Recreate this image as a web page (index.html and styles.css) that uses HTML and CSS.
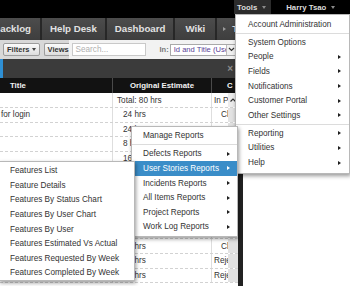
FILE: index.html
```html
<!DOCTYPE html>
<html lang="en">
<head>
  <meta charset="UTF-8">
  <title>Tasks</title>
  <link rel="stylesheet" href="styles.css">
</head>
<body>
<div class="page">

  <!-- top user bar -->
  <div class="topbar">
    <span class="nav-item active">Tools <i class="caret"></i></span>
    <span class="nav-item user">Harry Tsao <i class="caret"></i></span>
  </div>

  <!-- product tabs -->
  <div class="tabs">
    <span class="tab first">Backlog</span>
    <span class="tab">Help Desk</span>
    <span class="tab">Dashboard</span>
    <span class="tab wiki">Wiki</span>
    <span class="tab more"><i class="tab-arrow"></i>T</span>
  </div>

  <div class="workspace">
    <div class="grid-pane">
      <div class="toolbar">
        <span class="btn">Filters <i class="caret dark"></i></span>
        <span class="btn cut">Views</span>
        <div class="search">
          <span class="search-box">Search...</span>
          <span class="in-label">In:</span>
          <span class="select">
            <span class="select-text">Id and Title (Use</span>
            <span class="select-btn">
              <svg width="7" height="5" viewBox="0 0 7 5"><polyline points="1,1 3.5,3.5 6,1" fill="none" stroke="#333" stroke-width="1.2"/></svg>
            </span>
          </span>
        </div>
      </div>

      <div class="titlebar"><span class="close">&times;</span></div>

      <div class="grid-head">
        <span class="hcell title">Title</span>
        <span class="hcell est">Original Estimate</span>
        <span class="hcell status">C</span>
      </div>

      <div class="grid-body">
        <div class="row first">
          <span class="cell"></span>
          <span class="cell est total">Total: 80 hrs</span>
          <span class="cell status">In Progress</span>
          <span class="cell scroll up">
            <svg width="6" height="4" viewBox="0 0 6 4"><polyline points="0.5,3.5 3,1 5.5,3.5" fill="none" stroke="#333" stroke-width="1.2"/></svg>
          </span>
        </div>
        <div class="row">
          <span class="cell">for login</span>
          <span class="cell est">24 hrs</span>
          <span class="cell status mid">Closed</span>
          <span class="cell scroll"></span>
        </div>
        <div class="row"><span class="cell"></span><span class="cell est">24 hrs</span><span class="cell status"></span><span class="cell scroll"></span></div>
        <div class="row"><span class="cell"></span><span class="cell est">8 hrs</span><span class="cell status"></span><span class="cell scroll"></span></div>
        <div class="row"><span class="cell"></span><span class="cell est">16 hrs</span><span class="cell status"></span><span class="cell scroll"></span></div>
        <div class="row"><span class="cell"></span><span class="cell est">8 hrs</span><span class="cell status"></span><span class="cell scroll"></span></div>
        <div class="row"><span class="cell"></span><span class="cell est">16 hrs</span><span class="cell status"></span><span class="cell scroll"></span></div>
        <div class="row"><span class="cell"></span><span class="cell est">8 hrs</span><span class="cell status"></span><span class="cell scroll"></span></div>
        <div class="row"><span class="cell"></span><span class="cell est">24 hrs</span><span class="cell status"></span><span class="cell scroll"></span></div>
        <div class="row"><span class="cell"></span><span class="cell est">8 hrs</span><span class="cell status"></span><span class="cell scroll"></span></div>
        <div class="row"><span class="cell"></span><span class="cell est">24 hrs</span><span class="cell status mid">Closed</span><span class="cell scroll"></span></div>
        <div class="row"><span class="cell"></span><span class="cell est">24 hrs</span><span class="cell status">Rejected</span><span class="cell scroll"></span></div>
        <div class="row"><span class="cell"></span><span class="cell est">24 hrs</span><span class="cell status">Rejected</span><span class="cell scroll"></span></div>
      </div>
    </div>
    <div class="side-pane"></div>
  </div>

  <!-- Tools dropdown -->
  <div class="menu tools-menu">
    <div class="menu-item">Account Administration</div>
    <div class="menu-sep"></div>
    <div class="menu-item">System Options</div>
    <div class="menu-item">People<i class="arrow"></i></div>
    <div class="menu-item">Fields<i class="arrow"></i></div>
    <div class="menu-item">Notifications<i class="arrow"></i></div>
    <div class="menu-item">Customer Portal<i class="arrow"></i></div>
    <div class="menu-item">Other Settings<i class="arrow"></i></div>
    <div class="menu-sep"></div>
    <div class="menu-item">Reporting<i class="arrow"></i></div>
    <div class="menu-item">Utilities<i class="arrow"></i></div>
    <div class="menu-item">Help<i class="arrow"></i></div>
  </div>

  <!-- Reporting submenu -->
  <div class="menu reports-menu">
    <div class="menu-item">Manage Reports</div>
    <div class="menu-sep"></div>
    <div class="menu-item">Defects Reports<i class="arrow"></i></div>
    <div class="menu-item selected">User Stories Reports<i class="arrow"></i></div>
    <div class="menu-item">Incidents Reports<i class="arrow"></i></div>
    <div class="menu-item">All Items Reports<i class="arrow"></i></div>
    <div class="menu-item">Project Reports<i class="arrow"></i></div>
    <div class="menu-item">Work Log Reports<i class="arrow"></i></div>
  </div>

  <!-- User Stories submenu -->
  <div class="menu features-menu">
    <div class="menu-item">Features List</div>
    <div class="menu-item">Feature Details</div>
    <div class="menu-item">Features By Status Chart</div>
    <div class="menu-item">Features By User Chart</div>
    <div class="menu-item">Features By User</div>
    <div class="menu-item">Features Estimated Vs Actual</div>
    <div class="menu-item">Features Requested By Week</div>
    <div class="menu-item">Features Completed By Week</div>
  </div>

</div>
</body>
</html>
```

FILE: styles.css
```css
html, body {
  margin: 0;
  padding: 0;
  background: #fff;
  font-family: 'Liberation Sans', Arial, sans-serif;
  overflow: hidden;
}

.page {
  position: relative;
  width: 350px;
  height: 286px;
  overflow: hidden;
}

/* top bar */
.topbar {
  height: 18px;
  background: #000;
  display: flex;
  padding-left: 234px;
}

.nav-item {
  display: flex;
  align-items: center;
  gap: 5px;
  height: 14px;
  padding: 0 5px 0 3px;
  color: #dcdcdc;
  font-size: 7.8px;
  font-weight: bold;
}

.nav-item.active {
  background: #2c2c2c;
}

.nav-item.user {
  margin-left: 12px;
}

.caret {
  width: 0;
  height: 0;
  border-top: 3px solid #8a8a8a;
  border-left: 2.5px solid transparent;
  border-right: 2.5px solid transparent;
}

.caret.dark {
  border-top-color: #444;
}

/* tabs */
.tabs {
  display: flex;
  height: 22px;
  background: linear-gradient(#4c4c4c, #3e3e3e);
}

.tab {
  padding: 0 8px;
  line-height: 22px;
  color: #e2e2e2;
  font-size: 9.7px;
  font-weight: bold;
  white-space: nowrap;
  border-right: 2px solid #272727;
}

.tab.first {
  width: 31px;
  padding: 0 9px 0 0;
  display: flex;
  justify-content: flex-end;
  overflow: hidden;
}

.tab.wiki {
  padding: 0 10px;
}

.tab.more {
  display: flex;
  align-items: center;
  gap: 6px;
  padding: 0 4px 0 6px;
  border-right: none;
}

.tab-arrow {
  width: 0;
  height: 0;
  border-left: 3px solid #9a9a9a;
  border-top: 2.5px solid transparent;
  border-bottom: 2.5px solid transparent;
}

/* workspace */
.workspace {
  display: flex;
  height: 246px;
}

.grid-pane {
  width: 238px;
  flex-shrink: 0;
  overflow: hidden;
}

.side-pane {
  flex: 1;
  border-left: 5px solid #222;
  background: #fff;
}

.toolbar {
  height: 19px;
  display: flex;
  align-items: center;
  background: #d8d8d8;
}

.btn {
  display: flex;
  align-items: center;
  gap: 2px;
  height: 11px;
  margin-left: 3px;
  padding: 0 3px;
  border: 1px solid #9c9c9c;
  border-radius: 2px;
  background: linear-gradient(#fbfbfb, #dcdcdc);
  color: #333;
  font-size: 7.5px;
  font-weight: bold;
  white-space: nowrap;
}

.btn.cut {
  margin-left: 4px;
  width: 21px;
  padding-right: 0;
  border-right: none;
  border-radius: 2px 0 0 2px;
  overflow: hidden;
}

.search {
  flex: 1;
  align-self: stretch;
  display: flex;
  align-items: center;
  padding-left: 3px;
  background: #f2f2f2;
}

.search-box {
  width: 69px;
  height: 11px;
  padding-left: 3px;
  border: 1px solid #c9c9c9;
  background: #fff;
  color: #b0b0b0;
  font-size: 8.2px;
  line-height: 11px;
}

.in-label {
  margin-left: 14px;
  color: #777;
  font-size: 7.5px;
  font-weight: bold;
}

.select {
  display: flex;
  margin-left: 1px;
  width: 66px;
  height: 10px;
  border: 1px solid #a9a9a9;
  background: #fff;
}

.select-text {
  flex: 1;
  padding-left: 3px;
  overflow: hidden;
  white-space: nowrap;
  color: #5a3f98;
  font-size: 7.6px;
  line-height: 10px;
}

.select-btn {
  width: 10px;
  display: flex;
  align-items: center;
  justify-content: center;
  border-left: 1px solid #bbb;
  background: #f0f0f0;
}

.titlebar {
  height: 19px;
  display: flex;
  align-items: center;
  justify-content: flex-end;
  padding-right: 5px;
  background: #3b3b3b;
  border-left: 3px solid #2e8fd4;
}

.close {
  color: #8c8c8c;
  font-size: 10px;
  font-weight: bold;
}

/* grid */
.grid-head {
  display: grid;
  grid-template-columns: 113px 99px 26px;
  height: 15px;
  background: #121212;
  color: #f2f2f2;
  font-size: 7.8px;
  font-weight: bold;
}

.hcell {
  display: flex;
  align-items: center;
  border-right: 1px solid #4a4a4a;
  white-space: nowrap;
  overflow: hidden;
}

.hcell.title {
  padding-left: 10px;
}

.hcell.est {
  justify-content: center;
}

.hcell.status {
  padding-left: 15px;
  border-right: none;
}

.row {
  display: grid;
  grid-template-columns: 113px 99px 16px 10px;
  height: 14.6px;
  box-sizing: border-box;
  border-bottom: 1px dashed #d2d2d2;
  color: #333;
  font-size: 8.2px;
}

.row.first {
  height: 15px;
}

.cell {
  display: flex;
  align-items: center;
  padding-left: 1px;
  white-space: nowrap;
  overflow: hidden;
  border-right: 1px solid #dedede;
}

.cell.est {
  padding-left: 10px;
}

.cell.est.total {
  padding-left: 4px;
}

.cell.status {
  padding-left: 2px;
  border-right: none;
}

.cell.status.mid {
  padding-left: 9px;
}

.cell.scroll {
  padding: 0;
  border-right: none;
  background: #e2e2e2;
  justify-content: center;
}

.cell.scroll.up {
  background: #ececec;
}

/* dropdown menus */
.menu {
  position: absolute;
  background: #fff;
  border: 1px solid #b8b8b8;
  box-shadow: 1px 2px 4px rgba(0, 0, 0, 0.4);
  color: #333;
  font-size: 8.2px;
}

.menu-item {
  display: flex;
  align-items: center;
  white-space: nowrap;
}

.menu-sep {
  height: 1px;
  margin: 1px 0;
  background: #dcdcdc;
}

.arrow {
  margin-left: auto;
  width: 0;
  height: 0;
  border-left: 3px solid #1e1e1e;
  border-top: 2.5px solid transparent;
  border-bottom: 2.5px solid transparent;
}

.tools-menu {
  left: 235px;
  top: 14px;
  width: 113px;
  padding: 2px 0 3px;
  z-index: 1;
}

.tools-menu .menu-item {
  height: 14.7px;
  padding: 0 8px 0 12px;
}

.reports-menu {
  left: 131px;
  top: 126px;
  width: 105px;
  padding: 1px 0 2px;
  z-index: 2;
}

.reports-menu .menu-item {
  height: 14.6px;
  padding: 0 7px 0 11px;
}

.reports-menu .menu-sep {
  margin: 1.5px 0;
}

.menu-item.selected {
  background: #3a8dc8;
  color: #fff;
}

.menu-item.selected .arrow {
  border-left-color: #fff;
}

.features-menu {
  left: -1px;
  top: 161px;
  width: 134px;
  padding: 1.5px 0 0;
  z-index: 3;
}

.features-menu .menu-item {
  height: 14.6px;
  padding-left: 10px;
}
```
